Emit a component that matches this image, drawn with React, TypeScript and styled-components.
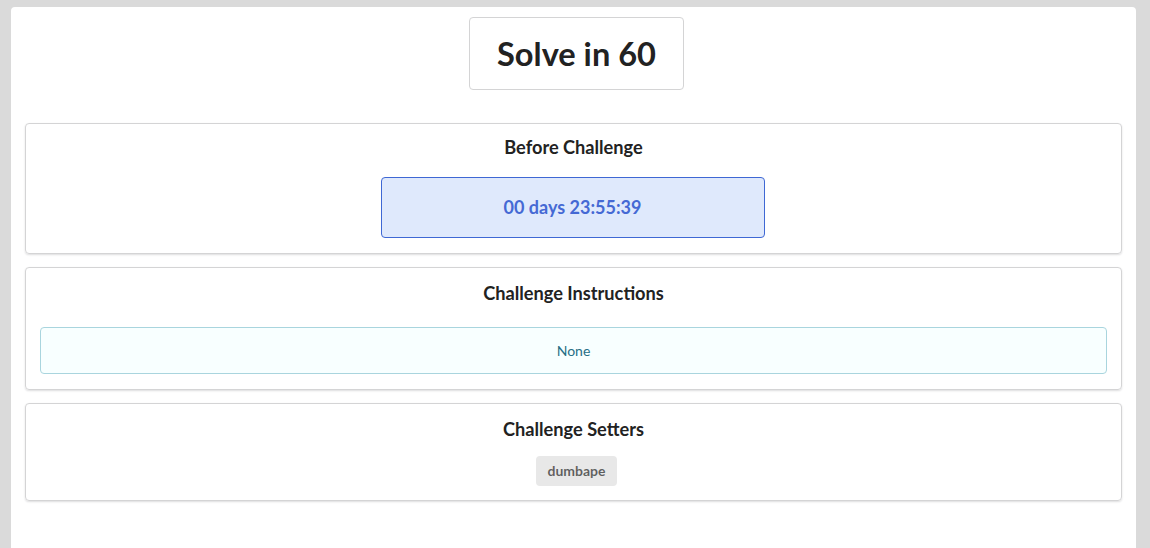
import React from "react";
import styled, { createGlobalStyle } from "styled-components";

const Global = createGlobalStyle`
  html, body { margin: 0; padding: 0; }
  body {
    background: #dadada;
    font-family: Lato, "Helvetica Neue", Arial, sans-serif;
    color: rgba(0,0,0,0.87);
    overflow: hidden;
  }
  * { box-sizing: border-box; }
`;

const Page = styled.div`
  padding: 7px 14px 0 11px;
`;

const Sheet = styled.main`
  background: #fff;
  border-radius: 4px 4px 0 0;
  min-height: 560px;
  padding: 10px 14px 20px;
  display: flex;
  flex-direction: column;
  align-items: stretch;
`;

const TitleBox = styled.div`
  align-self: center;
  border: 1px solid #d4d4d5;
  border-radius: 4px;
  padding: 15px 27px 15px;
  margin: 0 0 33px 6px;
`;

const Title = styled.h1`
  margin: 0;
  font-size: 32.6px;
  font-weight: 700;
  line-height: 41px;
  color: #222;
`;

const Stack = styled.div`
  display: flex;
  flex-direction: column;
  gap: 13px;
`;

const Card = styled.section<{ $padTop: number; $padBottom: number }>`
  border: 1px solid #d4d4d5;
  border-radius: 4px;
  box-shadow: 0 1px 2px 0 rgba(34, 36, 38, 0.15);
  padding: ${(p) => p.$padTop}px 14px ${(p) => p.$padBottom}px;
  display: flex;
  flex-direction: column;
  align-items: center;
`;

const CardHeader = styled.h3<{ $gap: number }>`
  margin: 0 0 ${(p) => p.$gap}px;
  font-size: 18.2px;
  font-weight: 700;
  line-height: 23px;
  color: #222;
`;

const Countdown = styled.div`
  width: 384px;
  margin-right: 2px;
  background: #dfe9fc;
  border: 1px solid #3f68d4;
  border-radius: 4px;
  padding: 18px 0;
  text-align: center;
  font-size: 18px;
  font-weight: 700;
  line-height: 23px;
  color: #4569d4;
`;

const InfoMessage = styled.div`
  align-self: stretch;
  background: #f8ffff;
  border: 1px solid #a9d5de;
  border-radius: 4px;
  padding: 13px 0 12px;
  text-align: center;
  font-size: 14px;
  line-height: 20px;
  color: #276f86;
`;

const Labels = styled.div`
  display: flex;
  gap: 6px;
  justify-content: center;
  padding-left: 6px;
`;

const Label = styled.span`
  display: inline-block;
  background: #e8e8e8;
  color: rgba(0, 0, 0, 0.6);
  border-radius: 4px;
  padding: 8px 11px;
  font-size: 14px;
  font-weight: 700;
  line-height: 14px;
`;

export default function App() {
  const setters = ["dumbape"];
  return (
    <>
      <Global />
      <Page>
        <Sheet>
          <TitleBox>
            <Title>Solve in 60</Title>
          </TitleBox>
          <Stack>
            <Card $padTop={12} $padBottom={15}>
              <CardHeader $gap={18}>Before Challenge</CardHeader>
              <Countdown>00 days 23:55:39</Countdown>
            </Card>
            <Card $padTop={14} $padBottom={15}>
              <CardHeader $gap={22}>Challenge Instructions</CardHeader>
              <InfoMessage>None</InfoMessage>
            </Card>
            <Card $padTop={14} $padBottom={14}>
              <CardHeader $gap={15}>Challenge Setters</CardHeader>
              <Labels>
                {setters.map((s) => (
                  <Label key={s}>{s}</Label>
                ))}
              </Labels>
            </Card>
          </Stack>
        </Sheet>
      </Page>
    </>
  );
}
